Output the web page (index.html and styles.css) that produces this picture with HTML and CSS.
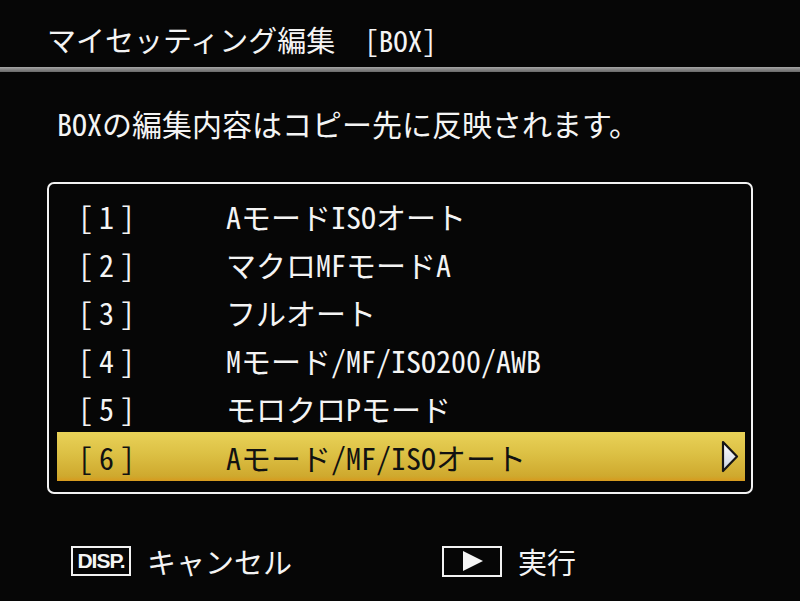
FILE: index.html
```html
<!DOCTYPE html>
<html lang="ja">
<head>
<meta charset="utf-8">
<title>マイセッティング編集 [BOX]</title>
<link rel="stylesheet" href="styles.css">
</head>
<body>
<div class="screen">
  <header class="title">マイセッティング編集　<span class="hw">[BOX]</span></header>
  <div class="rule"></div>
  <p class="note"><span class="hw">BOX</span>の編集内容はコピー先に反映されます。</p>
  <div class="list">
    <div class="row"><span class="num hw">[1]</span><span class="label"><span class="hw">A</span>モード<span class="hw">ISO</span>オート</span></div>
    <div class="row"><span class="num hw">[2]</span><span class="label">マクロ<span class="hw">MF</span>モード<span class="hw">A</span></span></div>
    <div class="row"><span class="num hw">[3]</span><span class="label">フルオート</span></div>
    <div class="row"><span class="num hw">[4]</span><span class="label"><span class="hw">M</span>モード<span class="hw">/MF/ISO200/AWB</span></span></div>
    <div class="row"><span class="num hw">[5]</span><span class="label">モロクロ<span class="hw">P</span>モード</span></div>
    <div class="row sel"><span class="num hw">[6]</span><span class="label"><span class="hw">A</span>モード<span class="hw">/MF/ISO</span>オート</span>
      <svg class="arrow" width="18" height="33" viewBox="0 0 18 33">
        <defs>
          <linearGradient id="ag" x1="0" y1="0" x2="0" y2="1">
            <stop offset="0" stop-color="#ffffff"/>
            <stop offset="1" stop-color="#c9d2e0"/>
          </linearGradient>
        </defs>
        <polygon points="2,2 16,16.5 2,31" fill="url(#ag)" stroke="#151515" stroke-width="2.2" stroke-linejoin="round"/>
      </svg>
    </div>
  </div>
  <footer class="foot">
    <div class="key"><span class="disp">DISP.</span><span class="keytext">キャンセル</span></div>
    <div class="key"><span class="play"><svg width="22" height="22" viewBox="0 0 22 22"><polygon points="1,1 21,11 1,21" fill="#f4f4f4"/></svg></span><span class="keytext">実行</span></div>
  </footer>
</div>
</body>
</html>
```
FILE: styles.css
```css
html, body {
  margin: 0;
  padding: 0;
  background: #050505;
}
body {
  color: #f4f4f4;
  font-family: "Noto Sans CJK JP", "Noto Sans", sans-serif;
}
.screen {
  width: 800px;
  height: 601px;
  overflow: hidden;
  background: #060606;
}
.hw {
  font-feature-settings: "hwid" 1;
}
.title {
  padding: 19px 0 0 47px;
  height: 41px;
  line-height: 40px;
  font-size: 29px;
  white-space: nowrap;
}
.rule {
  margin-top: 7px;
  height: 5px;
  background: linear-gradient(#a8a8a8, #8a8a8a 40%, #6a6a6a);
}
.note {
  margin: 31px 0 0 57px;
  line-height: 40px;
  font-size: 30px;
  white-space: nowrap;
}
.list {
  margin: 39px 0 0 47px;
  width: 688px;
  border: 2px solid #f2f2f2;
  border-radius: 7px;
  padding: 8px 6px 11px 8px;
  display: flex;
  flex-direction: column;
}
.row {
  height: 48px;
  display: flex;
  align-items: center;
  padding-left: 21px;
  font-size: 30px;
  white-space: nowrap;
}
.num {
  width: 148px;
  flex: none;
  letter-spacing: 6px;
}
.label {
  flex: 1;
}
.sel {
  height: 49px;
  color: #111;
  background: linear-gradient(#e9d258, #dcc044 45%, #cfa92e 90%, #d79a1e);
  padding-right: 6px;
}
.arrow {
  flex: none;
  display: block;
}
.foot {
  margin-top: 49px;
  display: flex;
  align-items: center;
  padding-left: 71px;
}
.key {
  display: flex;
  align-items: center;
}
.key + .key {
  margin-left: 150px;
}
.disp {
  box-sizing: border-box;
  width: 60px;
  height: 30px;
  border: 2px solid #f2f2f2;
  font-family: "Liberation Sans", sans-serif;
  font-weight: 700;
  font-size: 21px;
  letter-spacing: -1px;
  line-height: 26px;
  text-align: center;
}
.play {
  box-sizing: border-box;
  width: 60px;
  height: 31px;
  border: 2px solid #f2f2f2;
  display: flex;
  align-items: center;
  justify-content: center;
}
.play svg {
  display: block;
  margin-left: 2px;
}
.keytext {
  margin-left: 16px;
  font-size: 29px;
  line-height: 36px;
}
```
